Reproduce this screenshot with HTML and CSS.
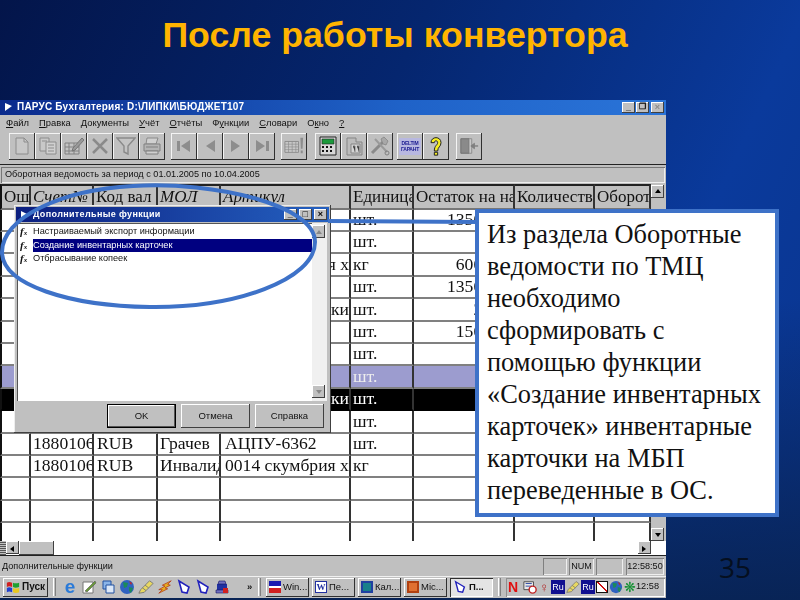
FILE: index.html
```html
<!DOCTYPE html>
<html lang="ru">
<head>
<meta charset="utf-8">
<title>После работы конвертора</title>
<link rel="stylesheet" href="styles.css">
</head>
<body>
<svg class="defs" width="0" height="0">
  <defs>
    <symbol id="i-doc" viewBox="0 0 20 20"><path d="M4 2h8l4 4v12H4z" fill="#c8c8c8" stroke="#8c8c8c"/><path d="M12 2v4h4" fill="none" stroke="#8c8c8c"/></symbol>
    <symbol id="i-copy" viewBox="0 0 20 20"><path d="M2 2h9v13H2z" fill="#c8c8c8" stroke="#8c8c8c"/><path d="M8 6h10v12H8z" fill="#d0d0d0" stroke="#8c8c8c"/><path d="M10 9h6M10 12h6M10 15h6M4 5h5" stroke="#8c8c8c"/></symbol>
    <symbol id="i-edit" viewBox="0 0 20 20"><path d="M1 7h14v11H1z" fill="#c4c4c4" stroke="#808080"/><path d="M1 11h14M1 15h14M5 7v11M10 7v11" stroke="#808080"/><path d="M9 12 18 2l2 2-9 10-3 1z" fill="#9a9a9a" stroke="#777"/></symbol>
    <symbol id="i-x" viewBox="0 0 20 20"><path d="M3 3l14 14M17 3 3 17" stroke="#8a8a8a" stroke-width="2.5"/></symbol>
    <symbol id="i-funnel" viewBox="0 0 20 20"><path d="M1 2h18l-7 8v8l-4-2v-6z" fill="#c4c4c4" stroke="#8a8a8a" stroke-width="1.4"/></symbol>
    <symbol id="i-print" viewBox="0 0 20 20"><path d="M5 2h11l-2 6H4z" fill="#d0d0d0" stroke="#8a8a8a"/><path d="M2 8h16v7H2z" fill="#b4b4b4" stroke="#808080"/><path d="M4 15h12v3H4z" fill="#d0d0d0" stroke="#808080"/><path d="M4 11h12" stroke="#808080"/></symbol>
    <symbol id="i-first" viewBox="0 0 20 20"><path d="M3 5h3v10H3zM16 4v12L7 10z" fill="#8d8d8d"/></symbol>
    <symbol id="i-prev" viewBox="0 0 20 20"><path d="M15 4v12L6 10z" fill="#8d8d8d"/></symbol>
    <symbol id="i-next" viewBox="0 0 20 20"><path d="M5 4v12l9-6z" fill="#8d8d8d"/></symbol>
    <symbol id="i-last" viewBox="0 0 20 20"><path d="M4 4v12l9-6zM14 5h3v10h-3z" fill="#8d8d8d"/></symbol>
    <symbol id="i-cal" viewBox="0 0 22 20"><path d="M1 5h15v12H1z" fill="#c8c8c8" stroke="#8a8a8a"/><path d="M1 8h15M1 11h15M1 14h15M5 5v12M9 5v12M13 5v12" stroke="#8a8a8a" stroke-width=".7"/><path d="M18 1h3l-.6 12h-1.8zM18.4 15h2.2v3h-2.2z" fill="#8d8d8d"/></symbol>
    <symbol id="i-calc" viewBox="0 0 20 20"><path d="M2 1h16v18H2z" fill="#d8d8d8" stroke="#222"/><path d="M4 3h12v5H4z" fill="#1c9a3c" stroke="#222" stroke-width=".6"/><path d="M4 10h2v2H4zM8 10h2v2H8zM12 10h2v2h-2zM4 14h2v2H4zM8 14h2v2H8zM12 14h2v2h-2z" fill="#111"/></symbol>
    <symbol id="i-gdoc" viewBox="0 0 20 20"><path d="M3 2h9v4h6v13H3z" fill="#bcbcbc" stroke="#858585"/><path d="M7 8h9v9H7z" fill="#d4d4d4" stroke="#858585"/><path d="M9 10h2v6M13 10h2v6" stroke="#858585"/></symbol>
    <symbol id="i-tools" viewBox="0 0 20 20"><path d="M2 17 13 6" stroke="#8a8a8a" stroke-width="3"/><path d="M11 3l3-2 4 4-2 4-3-1z" fill="#a8a8a8" stroke="#808080" stroke-width=".7"/><path d="M5 3l12 13" stroke="#9a9a9a" stroke-width="2"/><circle cx="17" cy="17" r="2" fill="none" stroke="#808080"/></symbol>
    <symbol id="i-q" viewBox="0 0 20 24"><path d="M4 8c0-8 12-8 12 0 0 5-4 5-4 10H8c0-7 4-7 4-10 0-3-4-3-4 0z" fill="#f6ee20" stroke="#222" stroke-width="1.2"/><path d="M8 19.5h4v3.5H8z" fill="#f6ee20" stroke="#222" stroke-width="1.2"/></symbol>
    <symbol id="i-door" viewBox="0 0 22 20"><path d="M2 2h9v16H2z" fill="#8a8a8a" stroke="#6c6c6c"/><path d="M11 2h3v16h-3z" fill="#c8c8c8" stroke="#8a8a8a"/><path d="M21 10h-4V7l-4 3 4 3v-3z" fill="#808080" stroke="#808080"/></symbol>
    <symbol id="i-shape" viewBox="0 0 16 16"><path d="M3 2 13 8l-2 6-5-1z" fill="#fff" stroke="#2222bb" stroke-width="1.6"/></symbol>
    <symbol id="i-globe" viewBox="0 0 16 16"><circle cx="8" cy="8" r="7" fill="#2f62c0"/><path d="M4 3l5 1-1 4-3 1zM10 8l4 1-2 5-2-2z" fill="#1b8a5a"/><path d="M10 2l3 2-1 2z" fill="#c22"/></symbol>
    <symbol id="i-pencil" viewBox="0 0 18 16"><path d="M1 15 3 11 13 1l4 3L7 14z" fill="#e8d860" stroke="#777"/><path d="M5 9l4 3M8 6l4 3" stroke="#777"/></symbol>
    <symbol id="i-bolt" viewBox="0 0 18 16"><path d="M16 1 6 6l3 1-7 4 4 0-4 4 10-5-3-1 6-3-3-1z" fill="#e8b020" stroke="#b03010" stroke-width=".8"/></symbol>
    <symbol id="i-paper" viewBox="0 0 16 16"><path d="M2 3h10v11H2z" fill="#fff" stroke="#777"/><path d="M4 12 14 2l1 2L6 13z" fill="#6a9a3a" stroke="#555" stroke-width=".6"/></symbol>
    <symbol id="i-screen" viewBox="0 0 16 16"><path d="M3 2h8v8H3z" fill="#8ab4e8" stroke="#2050a0"/><path d="M6 6h8v8H6z" fill="#dce8f8" stroke="#2050a0"/></symbol>
    <symbol id="i-machine" viewBox="0 0 16 16"><path d="M3 5h10v6H3z" fill="#2030a0"/><path d="M5 2h6l1 3H4zM2 11h12v3H2z" fill="#7070c0" stroke="#101060" stroke-width=".6"/><path d="M9 9h5v5H9z" fill="#d02020"/></symbol>
    <symbol id="i-tcal" viewBox="0 0 16 16"><path d="M1 2h11v9H1z" fill="#e8e8e8" stroke="#444"/><path d="M3 4h7M3 7h7" stroke="#2040a0"/><circle cx="11" cy="11" r="4" fill="#fff" stroke="#c02020" stroke-width="1.6"/></symbol>
    <symbol id="i-flag" viewBox="0 0 16 16"><path d="M1 3c2-1 3-1 6 0v5C4 7 3 7 1 8z" fill="#d02020"/><path d="M8 3c2 1 4 1 7 0v5c-3 1-5 1-7 0z" fill="#20a030"/><path d="M1 9c2-1 3-1 6 0v5c-3-1-4-1-6 0z" fill="#2040d0"/><path d="M8 9c2 1 4 1 7 0v5c-3 1-5 1-7 0z" fill="#e8c820"/></symbol>
  </defs>
</svg>

<main class="slide">
  <h1 class="title">После работы конвертора</h1>

  <section class="window">
    <header class="titlebar">
      <span class="app-mark"></span>
      <span class="app-name">ПАРУС Бухгалтерия: D:\ЛИПКИ\БЮДЖЕТ107</span>
      <span class="winbtns">
        <span class="winbtn">_</span><span class="winbtn winbtn-max">&#x2750;</span><span class="winbtn winbtn-off">×</span>
      </span>
    </header>

    <nav class="menu">
      <span><u>Ф</u>айл</span><span><u>П</u>равка</span><span><u>Д</u>окументы</span><span><u>У</u>чёт</span><span><u>О</u>тчёты</span><span>Ф<u>у</u>нкции</span><span><u>С</u>ловари</span><span>О<u>к</u>но</span><span><u>?</u></span>
    </nav>

    <div class="toolbar">
      <div class="tgroup">
        <span class="tb"><svg><use href="#i-doc"/></svg></span>
        <span class="tb"><svg><use href="#i-copy"/></svg></span>
        <span class="tb"><svg><use href="#i-edit"/></svg></span>
        <span class="tb"><svg><use href="#i-x"/></svg></span>
        <span class="tb"><svg><use href="#i-funnel"/></svg></span>
        <span class="tb"><svg><use href="#i-print"/></svg></span>
      </div>
      <div class="tgroup">
        <span class="tb"><svg><use href="#i-first"/></svg></span>
        <span class="tb"><svg><use href="#i-prev"/></svg></span>
        <span class="tb"><svg><use href="#i-next"/></svg></span>
        <span class="tb"><svg><use href="#i-last"/></svg></span>
      </div>
      <div class="tgroup">
        <span class="tb"><svg><use href="#i-cal"/></svg></span>
      </div>
      <div class="tgroup tgroup-calc">
        <span class="tb"><svg><use href="#i-calc"/></svg></span>
        <span class="tb"><svg><use href="#i-gdoc"/></svg></span>
        <span class="tb"><svg><use href="#i-tools"/></svg></span>
      </div>
      <div class="tgroup tgroup-help">
        <span class="tb"><span class="garant">DELTIM<br>ГАРАНТ</span></span>
        <span class="tb"><svg><use href="#i-q"/></svg></span>
      </div>
      <div class="tgroup tgroup-exit">
        <span class="tb"><svg><use href="#i-door"/></svg></span>
      </div>
    </div>

    <div class="info">Оборотная ведомость за период с 01.01.2005 по 10.04.2005</div>

    <div class="data">
      <table class="sheet">
        <colgroup><col class="w1"><col class="w2"><col class="w3"><col class="w4"><col class="w5"><col class="w6"><col class="w7"><col class="w8"><col class="w9"></colgroup>
        <thead>
          <tr><th>Ош</th><th class="it">Счет№</th><th>Код вал</th><th class="it">МОЛ</th><th class="it">Артикул</th><th>Единица</th><th>Остаток на на</th><th>Количеств</th><th>Оборот</th></tr>
        </thead>
        <tbody>
          <tr><td></td><td></td><td></td><td></td><td></td><td>шт.</td><td class="n">1350.000</td><td></td><td></td></tr>
          <tr><td></td><td></td><td></td><td></td><td></td><td>шт.</td><td></td><td></td><td></td></tr>
          <tr><td></td><td></td><td></td><td></td><td class="end">0014 скумбрия х</td><td>кг</td><td class="n">600.000</td><td></td><td></td></tr>
          <tr><td></td><td></td><td></td><td></td><td></td><td>шт.</td><td class="n">1350.000</td><td></td><td></td></tr>
          <tr><td></td><td></td><td></td><td></td><td class="end">карточки</td><td>шт.</td><td class="n">2.000</td><td></td><td></td></tr>
          <tr><td></td><td></td><td></td><td></td><td></td><td>шт.</td><td class="n">150.000</td><td></td><td></td></tr>
          <tr><td></td><td></td><td></td><td></td><td></td><td>шт.</td><td></td><td></td><td></td></tr>
          <tr class="sel"><td></td><td></td><td></td><td></td><td></td><td>шт.</td><td></td><td></td><td></td></tr>
          <tr class="cur"><td></td><td></td><td></td><td></td><td class="end">карточки</td><td>шт.</td><td></td><td></td><td></td></tr>
          <tr><td></td><td></td><td></td><td></td><td></td><td>шт.</td><td></td><td></td><td></td></tr>
          <tr><td></td><td>1880106</td><td>RUB</td><td>Грачев</td><td>АЦПУ-6362</td><td>шт.</td><td></td><td></td><td></td></tr>
          <tr><td></td><td>1880106</td><td>RUB</td><td>Инвалид</td><td>0014 скумбрия х</td><td>кг</td><td></td><td></td><td></td></tr>
          <tr><td></td><td></td><td></td><td></td><td></td><td></td><td></td><td></td><td></td></tr>
          <tr><td></td><td></td><td></td><td></td><td></td><td></td><td></td><td></td><td></td></tr>
          <tr><td></td><td></td><td></td><td></td><td></td><td></td><td></td><td></td><td></td></tr>
        </tbody>
      </table>
      <div class="vscroll">
        <span class="sbtn sbtn-up"></span>
        <span class="vtrack"></span>
        <span class="sbtn sbtn-down"></span>
      </div>
    </div>

    <div class="hscroll">
      <span class="grip"></span>
      <span class="sbtn sbtn-left"></span>
      <span class="hthumb"></span>
      <span class="htrack"></span>
      <span class="sbtn sbtn-right"></span>
      <span class="corner"></span>
    </div>

    <footer class="status">
      <span class="status-text">Дополнительные функции</span>
      <span class="panel p1"></span>
      <span class="panel p2">NUM</span>
      <span class="panel p3"></span>
      <span class="panel p4">12:58:50</span>
    </footer>

    <div class="taskbar">
      <span class="task start"><svg class="ti"><use href="#i-flag"/></svg><b>Пуск</b></span>
      <span class="sep"></span>
      <div class="quick">
        <span class="ie">e</span>
        <svg class="ti"><use href="#i-paper"/></svg>
        <svg class="ti"><use href="#i-screen"/></svg>
        <svg class="ti"><use href="#i-globe"/></svg>
        <svg class="ti"><use href="#i-pencil"/></svg>
        <svg class="ti"><use href="#i-bolt"/></svg>
        <svg class="ti"><use href="#i-shape"/></svg>
        <svg class="ti"><use href="#i-shape"/></svg>
        <svg class="ti"><use href="#i-machine"/></svg>
      </div>
      <span class="more">»</span>
      <span class="sep"></span>
      <span class="task"><span class="mini mini-save"></span>Win...</span>
      <span class="task"><span class="mini mini-word">W</span>Пе...</span>
      <span class="task"><span class="mini mini-calc"></span>Кал...</span>
      <span class="task"><span class="mini mini-ppt"></span>Mic...</span>
      <span class="task task-on"><svg class="ti"><use href="#i-shape"/></svg><b>П...</b></span>
      <span class="sep"></span>
      <div class="tray">
        <b class="tray-n">N</b>
        <svg class="ti"><use href="#i-tcal"/></svg>
        <span class="tray-key">♀</span>
        <span class="ru">Ru</span>
        <svg class="ti"><use href="#i-pencil"/></svg>
        <span class="ru">Ru</span>
        <span class="tray-box"></span>
        <svg class="ti"><use href="#i-globe"/></svg>
        <span class="tray-leaf">❋</span>
        <span class="clock">12:58</span>
      </div>
    </div>

    <aside class="dialog">
      <header class="dlg-title">
        <span class="dlg-mark"></span>
        <span class="dlg-name">Дополнительные функции</span>
        <span class="dlg-btns"><span class="winbtn">_</span><span class="winbtn">□</span><span class="winbtn">×</span></span>
      </header>
      <div class="dlg-list">
        <ul class="dlg-items">
          <li><i class="fx">f<small>x</small></i><span>Настраиваемый экспорт информации</span></li>
          <li class="picked"><i class="fx">f<small>x</small></i><span>Создание инвентарных карточек</span></li>
          <li><i class="fx">f<small>x</small></i><span>Отбрасывание копеек</span></li>
        </ul>
        <div class="dlg-scroll">
          <span class="sbtn sbtn-up sbtn-dim"></span>
          <span class="sbtn sbtn-down sbtn-dim"></span>
        </div>
      </div>
      <div class="dlg-actions">
        <span class="dbtn dbtn-default">OK</span>
        <span class="dbtn">Отмена</span>
        <span class="dbtn">Справка</span>
      </div>
    </aside>
  </section>

  <svg class="marks" viewBox="0 0 800 600">
    <path d="M133 186C215 181 315 205 315 242C315 280 235 308 150 307C70 306 2 285 2 252C2 218 60 190 133 186Z"/>
    <path d="M328 221L478 222"/>
  </svg>

  <aside class="callout">Из раздела Оборотные ведомости по ТМЦ необходимо сформировать с помощью функции «Создание инвентарных карточек» инвентарные карточки на МБП переведенные в ОС.</aside>

  <span class="pageno">35</span>
</main>
</body>
</html>
```
FILE: styles.css
```css
* { box-sizing: border-box; }
html, body { margin: 0; padding: 0; }
body { width: 800px; height: 600px; overflow: hidden; background: #04163f; }
.defs { position: absolute; }

.slide {
  position: relative;
  width: 800px;
  height: 600px;
  overflow: hidden;
  display: flex;
  flex-direction: column;
  background:
    linear-gradient(180deg, rgba(8,34,80,0) 50%, rgba(8,34,80,.9) 100%),
    linear-gradient(115deg, #03154a 0%, #05266f 40%, #0a3a9c 75%, #0a348c 100%);
}

.title {
  margin: 0;
  height: 100px;
  padding: 13px 10px 0 0;
  text-align: center;
  font: bold 35.7px/44px "Liberation Sans", Arial, sans-serif;
  color: #ffb400;
}

/* application window */
.window {
  position: relative;
  width: 666px;
  height: 498px;
  display: flex;
  flex-direction: column;
  background: #c0c0c0;
  font: 9px/1 "Liberation Sans", Arial, sans-serif;
  color: #111;
  filter: blur(.3px);
}

.titlebar {
  height: 15px;
  display: flex;
  align-items: center;
  padding: 0 2px 0 5px;
  gap: 5px;
  background: linear-gradient(90deg, #0a2a8c, #1f62c8 60%, #2a74d8);
  color: #fff;
  font-weight: bold;
  font-size: 10px;
}
.app-mark { width: 0; height: 0; border-left: 7px solid #fff; border-top: 3px solid transparent; border-bottom: 5px solid transparent; }
.app-name { flex: 1; letter-spacing: .2px; }
.winbtns, .dlg-btns { display: flex; gap: 1px; }
.winbtn {
  width: 13px;
  height: 11px;
  display: flex;
  align-items: center;
  justify-content: center;
  background: #c0c0c0;
  color: #000;
  font-size: 9px;
  font-weight: bold;
  box-shadow: inset -1px -1px #404040, inset 1px 1px #fff;
}
.winbtn-max { font-size: 8px; }
.winbtn-off { color: #8a8a8a; margin-left: 1px; }

.menu {
  height: 16px;
  display: flex;
  align-items: center;
  gap: 10px;
  padding-left: 6px;
  font-size: 9.4px;
}

.toolbar {
  height: 34px;
  display: flex;
  align-items: center;
  gap: 6px;
  padding: 0 0 2px 9px;
  border-bottom: 1px solid #222;
}
.tgroup { display: flex; }
.tgroup-calc { margin-left: 2px; }
.tgroup-help { margin-left: -2px; }
.tgroup-exit { margin-left: 1px; }
.tb {
  width: 26px;
  height: 27px;
  display: flex;
  align-items: center;
  justify-content: center;
  background: #c0c0c0;
  box-shadow: inset -1px -1px #303030, inset 1px 1px #f4f4f4;
}
.tb svg { width: 20px; height: 20px; }
.garant {
  width: 22px;
  height: 17px;
  padding-top: 2px;
  background: #b8b8e0;
  color: #1a1a90;
  font: bold 5px/6px "Liberation Sans", Arial, sans-serif;
  letter-spacing: -.2px;
  text-align: center;
}

.info {
  height: 16px;
  margin: 2px 1px 1px;
  padding-left: 4px;
  display: flex;
  align-items: center;
  box-shadow: inset 1px 1px #777, inset -1px -1px #eee;
  font-size: 9.15px;
}

.data { height: 359px; display: flex; overflow: hidden; background: #fff; }
.sheet {
  width: 651px;
  height: 359px;
  flex: none;
  table-layout: fixed;
  border-collapse: separate;
  border-spacing: 0;
  font: 17.6px/1 "Liberation Serif", "Times New Roman", serif;
  color: #111;
}
.w1 { width: 31px; } .w2 { width: 63px; } .w3 { width: 64px; }
.w4 { width: 63px; } .w5 { width: 130px; } .w6 { width: 63px; }
.w7 { width: 101px; } .w8 { width: 80px; } .w9 { width: 56px; }

.sheet th, .sheet td {
  padding: 0 0 0 2px;
  overflow: hidden;
  white-space: nowrap;
  text-align: left;
  font-weight: normal;
  border-right: 2px solid #333;
}
.sheet td:nth-child(5) { padding-left: 4px; }
.sheet td:nth-child(3) { padding-left: 3px; }
.sheet th {
  height: 26px;
  font-size: 17px;
  background: #c0c0c0;
  border-top: 2px solid #222;
  border-bottom: 2px solid #777;
}
.sheet td { height: 22.4px; border-bottom: 2px solid #808080; }
.sheet th:first-child, .sheet td:first-child { border-left: 2px solid #111; }
.sheet .it { font-style: italic; }
.sheet .n { text-align: right; }
.sheet .end { text-align: right; }
.sheet tbody tr:last-child td { border-bottom: 0; }
.sel td { background: #9c9ccf; color: #eee; }
.cur td { background: #000; color: #fff; border-bottom-color: #000; }

.vscroll { width: 15px; display: flex; flex-direction: column; padding-top: 1px; background: #c0c0c0; }
.vtrack { flex: 1; }
.sbtn {
  position: relative;
  display: block;
  flex: none;
  width: 13px;
  height: 13px;
  background: #c0c0c0;
  box-shadow: inset -1px -1px #404040, inset 1px 1px #fff;
}
.sbtn::after { content: ""; position: absolute; left: 50%; top: 50%; margin: -2px 0 0 -3px; border: 3px solid transparent; }
.sbtn-up::after { border-bottom: 4px solid #000; border-top: 0; }
.sbtn-down::after { border-top: 4px solid #000; border-bottom: 0; }
.sbtn-left::after { border-right: 4px solid #000; border-left: 0; }
.sbtn-right::after { border-left: 4px solid #000; border-right: 0; }
.sbtn-dim::after { border-bottom-color: #888; border-top-color: #888; }

.hscroll {
  height: 15px;
  display: flex;
  background: #fff;
  border-bottom: 1px solid #222;
}
.grip { width: 6px; background: repeating-linear-gradient(0deg, #555 0 1px, #c0c0c0 1px 2px); }
.hthumb { width: 35px; background: #c0c0c0; box-shadow: inset -1px -1px #404040, inset 1px 1px #fff; }
.htrack { flex: 1; }
.corner { width: 15px; }

.status {
  height: 20px;
  display: flex;
  align-items: center;
  gap: 2px;
  padding: 0 2px;
  font-size: 9.1px;
}
.status-text { flex: 1; }
.panel {
  height: 17px;
  display: flex;
  align-items: center;
  justify-content: center;
  box-shadow: inset 1px 1px #808080, inset -1px -1px #eee;
}
.p1 { width: 24px; } .p2 { width: 25px; } .p3 { width: 27px; } .p4 { width: 38px; margin-left: 1px; }

.taskbar {
  height: 22px;
  display: flex;
  align-items: center;
  gap: 3px;
  padding: 0 1px 0 3px;
  box-shadow: inset 0 1px #f0f0f0;
  font-size: 9.5px;
}
.sep { width: 3px; height: 18px; margin: 0 2px; box-shadow: inset 1px 0 #fff, inset -1px 0 #808080; }
.task {
  width: 43px;
  height: 19px;
  display: flex;
  align-items: center;
  gap: 2px;
  padding-left: 3px;
  overflow: hidden;
  white-space: nowrap;
  box-shadow: inset -1px -1px #303030, inset 1px 1px #fff;
}
.start { width: 45px; font-size: 10px; }
.task-on { background: #e4e4e4; box-shadow: inset 1px 1px #303030, inset -1px -1px #fff; }
.ti { width: 14px; height: 14px; flex: none; }
.quick { width: 183px; display: flex; align-items: center; gap: 3px; padding-left: 1px; }
.quick .ti, .quick .ie { width: 16px; height: 16px; }
.ie { text-align: center; font: bold 19px/15px "Liberation Sans", Arial, sans-serif; color: #2a7ad8; }
.more { width: 6px; font-weight: bold; }
.mini { width: 12px; height: 12px; flex: none; display: flex; align-items: center; justify-content: center; font: bold 9px/1 "Liberation Serif", serif; }
.mini-save { background: linear-gradient(180deg, #1a1ab0 45%, #fff 45% 60%, #d02020 60%); }
.mini-word { background: #fff; color: #2030a0; box-shadow: inset 0 0 0 1px #2030a0; }
.mini-calc { background: #17808a; box-shadow: inset 0 0 0 2px #2040a0; }
.mini-ppt { background: #e07030; box-shadow: inset 0 0 0 2px #b04010; }

.tray { flex: 1; height: 19px; display: flex; align-items: center; gap: 1px; box-shadow: inset 1px 1px #909090, inset -1px -1px #fff; padding-left: 2px; }
.tray-n { width: 14px; color: #e01010; font-size: 14px; }
.tray-key { width: 12px; color: #b02020; font-size: 13px; font-weight: bold; text-align: center; }
.ru { width: 14px; height: 14px; background: #101090; color: #fff; font-size: 9px; display: flex; align-items: center; justify-content: center; }
.tray-box { width: 12px; height: 12px; background: linear-gradient(45deg, #fff 48%, #d01010 48% 56%, #fff 56%); border: 1px solid #111; }
.tray-leaf { width: 10px; color: #109030; font-size: 14px; text-align: center; }
.clock { margin-left: 1px; font-size: 9.2px; }

/* functions dialog over the table */
.dialog {
  position: absolute;
  left: 14px;
  top: 105px;
  width: 317px;
  height: 228px;
  display: flex;
  flex-direction: column;
  padding: 2px;
  background: #c0c0c0;
  box-shadow: inset -1px -1px #404040, inset 1px 1px #eee;
}
.dlg-title {
  height: 15px;
  flex: none;
  display: flex;
  align-items: center;
  gap: 6px;
  padding-left: 5px;
  background: linear-gradient(90deg, #0c1f80, #2460c0);
  color: #fff;
  font-weight: bold;
  letter-spacing: .35px;
}
.dlg-mark { width: 0; height: 0; border-left: 6px solid #fff; border-top: 3px solid transparent; border-bottom: 5px solid transparent; }
.dlg-name { flex: 1; }
.dlg-btns { gap: 2px; padding-right: 2px; }
.dlg-list {
  height: 178px;
  flex: none;
  margin: 1px 2px 0 1px;
  display: flex;
  background: #fff;
  box-shadow: inset 1px 1px #555;
}
.dlg-items { flex: 1; margin: 0; padding: 2px 0 0 3px; list-style: none; }
.dlg-items li { height: 13.4px; display: flex; align-items: center; font-size: 9.2px; }
.dlg-items span { flex: 1; height: 13px; line-height: 13px; }
.picked span { background: #000080; color: #fff; }
.fx { width: 13px; font: italic bold 11px/1 "Liberation Serif", serif; }
.fx small { font-size: 7px; }
.dlg-scroll { width: 15px; display: flex; flex-direction: column; justify-content: space-between; padding: 2px 0 3px; background: #f0f0f0; }
.dlg-actions { flex: 1; display: flex; justify-content: flex-end; align-items: center; gap: 5px; padding-right: 5px; }
.dbtn {
  width: 69px;
  height: 24px;
  display: flex;
  align-items: center;
  justify-content: center;
  font-size: 9.5px;
  box-shadow: inset -1px -1px #404040, inset 1px 1px #fff;
}
.dbtn-default { box-shadow: inset 0 0 0 1px #000, inset -2px -2px #555, inset 2px 2px #fff; }

/* hand-drawn marks over the screenshot */
.marks { position: absolute; inset: 0; width: 800px; height: 600px; pointer-events: none; }
.marks path { fill: none; stroke: #3e72c8; stroke-width: 4; }

.callout {
  position: absolute;
  left: 475px;
  top: 209px;
  width: 304px;
  height: 308px;
  padding: 5px 8px 0 8px;
  background: #fff;
  border: 4px solid #3e72c8;
  color: #111;
  font: 26.4px/32px "Liberation Serif", "Times New Roman", serif;
}

.pageno {
  position: absolute;
  left: 719px;
  top: 550px;
  font: 28px/34px "Open Sans", "Liberation Sans", sans-serif;
  color: #050f20;
}
```
